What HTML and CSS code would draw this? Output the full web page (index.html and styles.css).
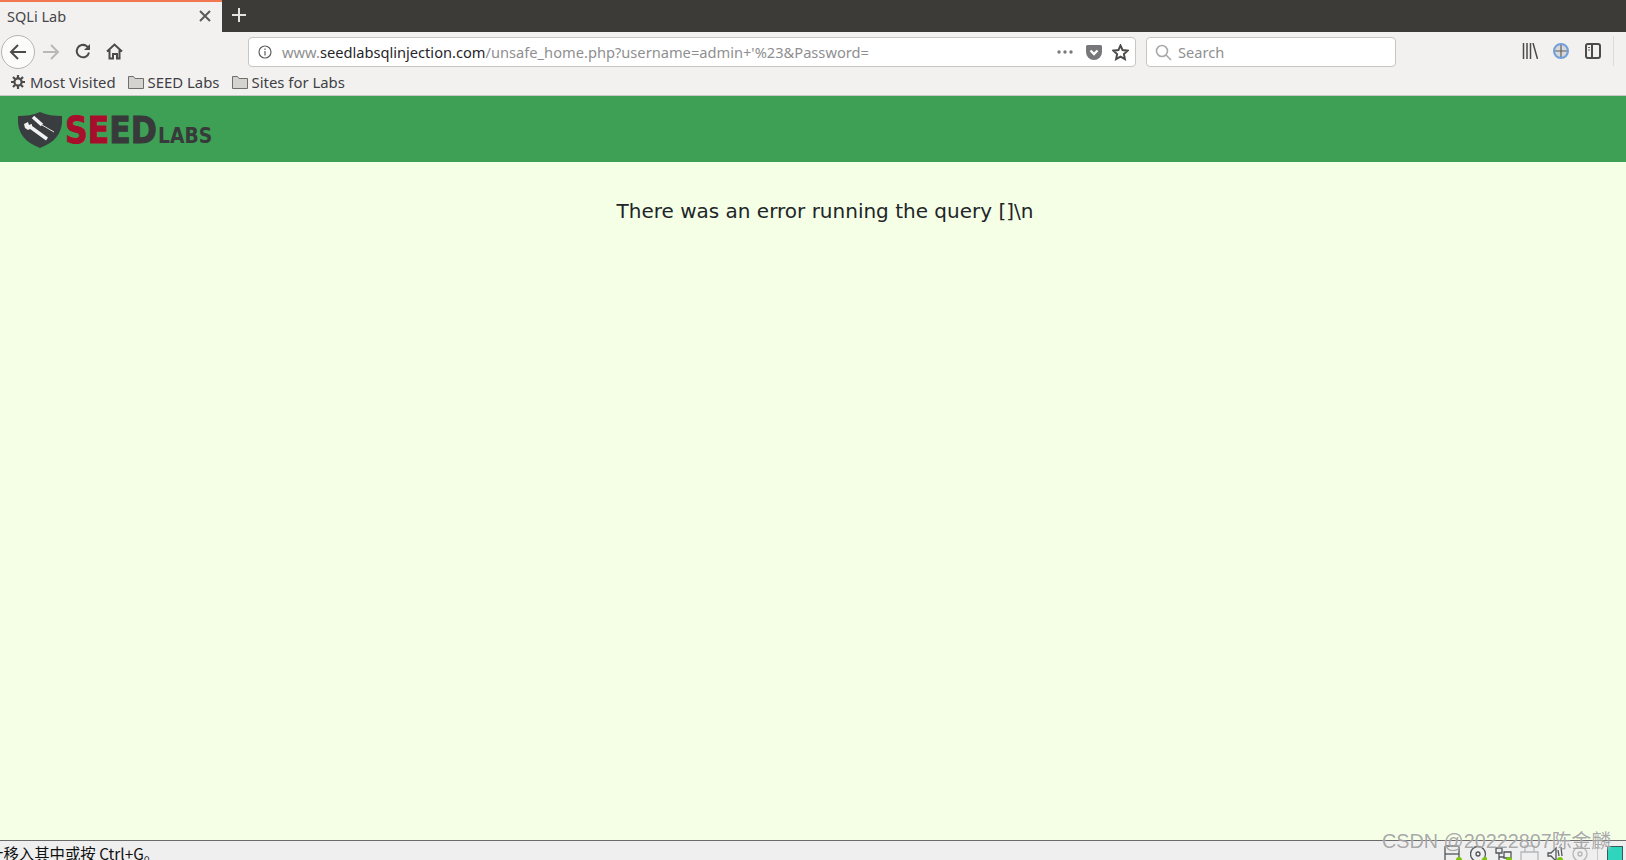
FILE: index.html
```html
<!DOCTYPE html>
<html lang="en">
<head>
<meta charset="utf-8">
<title>SQLi Lab</title>
<link rel="stylesheet" href="styles.css">
</head>
<body>
<div class="window">
  <header class="tabbar">
    <div class="tab">
      <span class="tab-title">SQLi Lab</span>
      <svg class="tab-close" width="14" height="14" viewBox="0 0 14 14"><path d="M2 2l10 10M12 2L2 12" class="st st-mid"/></svg>
    </div>
    <svg class="new-tab" width="16" height="16" viewBox="0 0 16 16"><path d="M8 1v14M1 8h14" class="st st-light"/></svg>
  </header>

  <nav class="toolbar">
    <div class="back"><svg width="18" height="18" viewBox="0 0 18 18"><path d="M17 9H2M9 2L2 9l7 7" class="st st-dark"/></svg></div>
    <svg class="forward" width="18" height="18" viewBox="0 0 18 18"><path d="M1 9h15M9 2l7 7-7 7" class="st st-faint"/></svg>
    <svg class="reload" width="16" height="16" viewBox="0 0 16 16"><path d="M14 9.5A6.2 6.2 0 1 1 11.5 3L14 5" class="st st-dark"/><path d="M15 1v6H9z" class="fill-dark"/></svg>
    <svg class="home" width="17" height="17" viewBox="0 0 17 17"><path d="M1 8.5L8.5 1.5 16 8.5M3.5 7v8.5h3.500V11h4v4.500h2.500V7" class="st st-dark"/></svg>
    <div class="field urlbar">
      <svg class="info" width="14" height="14" viewBox="0 0 14 14"><circle cx="7" cy="7" r="6" class="st st-thin"/><path d="M7 6v4.500M7 3.500v1.500" class="st st-thin"/></svg>
      <span class="url"><span class="url-dim">www.</span>seedlabsqlinjection.com<span class="url-dim">/unsafe_home.php?username=admin+'%23&amp;Password=</span></span>
      <svg class="dots" width="16" height="4" viewBox="0 0 16 4"><circle cx="2" cy="2" r="1.700"/><circle cx="8" cy="2" r="1.700"/><circle cx="14" cy="2" r="1.700"/></svg>
      <svg class="pocket" width="16" height="15" viewBox="0 0 16 15"><path d="M1.500 0h13A1.500 1.500 0 0 1 16 1.500V7A8 8 0 0 1 0 7V1.500A1.500 1.500 0 0 1 1.500 0z" class="fill-pocket"/><path d="M4.500 5.500L8 9l3.500-3.500" class="st st-white"/></svg>
      <svg class="star" width="17" height="17" viewBox="0 0 17 17"><path d="M8.500 1.500l2.100 4.600 5 .6-3.700 3.400 1 5-4.400-2.500-4.400 2.500 1-5L1.400 6.700l5-.6z" class="st st-dark"/></svg>
    </div>
    <div class="field searchbar">
      <svg width="17" height="17" viewBox="0 0 17 17"><circle cx="7" cy="7" r="5.500" class="st st-search"/><path d="M11 11l5 5" class="st st-search"/></svg>
      <span class="search-text">Search</span>
    </div>
    <svg class="library" width="16" height="16" viewBox="0 0 16 16"><path d="M1.500 0v16M5 0v16M8.500 0v16M11 0l4.500 16" class="st st-lib"/></svg>
    <svg class="globe" width="16" height="16" viewBox="0 0 16 16"><circle cx="8" cy="8" r="7" class="globe-ring"/><path d="M8 2v12M2 8h12" class="st st-thin"/></svg>
    <svg class="sidebar" width="16" height="16" viewBox="0 0 16 16"><rect x="1" y="1" width="14" height="14" rx="2" class="st st-dark"/><path d="M7 1v14" class="st st-dark"/><path d="M3 4.500h2M3 7h2" class="st st-thin"/></svg>
    <span class="toolbar-sep"></span>
  </nav>

  <div class="bookmarks">
    <svg class="gear" width="14" height="14" viewBox="0 0 14 14"><circle cx="7" cy="7" r="3.600" class="gear-ring"/><path d="M7 0v3M7 11v3M0 7h3M11 7h3M2 2l2 2M10 10l2 2M12 2l-2 2M4 10l-2 2" class="gear-teeth"/></svg>
    <span class="mark mark-first">Most Visited</span>
    <svg class="folder" width="16" height="15" viewBox="0 0 16 15"><path d="M.5 13.500V1.500h5l1.500 2h8.500v10z" class="folder-shape"/></svg>
    <span class="mark">SEED Labs</span>
    <svg class="folder" width="16" height="15" viewBox="0 0 16 15"><path d="M.5 13.500V1.500h5l1.500 2h8.500v10z" class="folder-shape"/></svg>
    <span class="mark">Sites for Labs</span>
  </div>

  <section class="site-header">
    <svg class="logo-shield" width="44" height="38" viewBox="0 0 44 38">
      <path d="M22 1C29 4 36 5 44 5c1 13-3 25-22 32C3 30-1 18 0 5 8 5 15 4 22 1z" class="shield"/>
      <path d="M11 15l18 13" class="tool-wrench"/>
      <path d="M6 13l4-2 1 3 3-1 0 4-4 2-3-2z" class="tool-head"/>
      <path d="M15 6l9 8" class="tool-wrench"/>
      <path d="M24 14l12 7" class="tool-thin"/>
    </svg>
    <span class="logo-seed"><span class="logo-red">SE</span><span class="logo-dark">ED</span></span>
    <span class="logo-labs">LABS</span>
  </section>

  <main class="content">
    <p class="message">There was an error running the query []\n</p>
  </main>

  <footer class="statusbar">
    <span class="status-text">针移入其中或按 Ctrl+G。</span>
    <div class="status-icons">
      <svg width="18" height="20" viewBox="0 0 18 20"><rect x="1" y="3" width="14" height="18" rx="1" class="st st-icon"/><path d="M1 11h14" class="st st-icon"/><circle cx="15" cy="17" r="3" class="dot"/></svg>
      <svg width="17" height="20" viewBox="0 0 17 20"><circle cx="8" cy="11" r="7.500" class="st st-icon"/><circle cx="8" cy="11" r="2" class="st st-icon"/><circle cx="15" cy="17" r="3" class="dot"/></svg>
      <svg width="17" height="20" viewBox="0 0 17 20"><path d="M1 5h6v5H1zM9 9h7v6H9zM4 10v8M4 14h5" class="st st-icon"/><circle cx="14" cy="17" r="3" class="dot"/></svg>
      <svg width="19" height="20" viewBox="0 0 19 20"><path d="M5 3h9v6H5zM1 9h17v11H1z" class="st st-gray"/></svg>
      <svg width="17" height="20" viewBox="0 0 17 20"><path d="M1 10h3l5-5v13l-5-5H1z" class="st st-icon"/><path d="M11 7l1 6M14 4l1 9" class="st st-icon"/><circle cx="13" cy="17" r="3" class="dot"/></svg>
      <svg width="17" height="20" viewBox="0 0 17 20"><circle cx="8" cy="11" r="7" class="st st-gray"/><circle cx="8" cy="11" r="2" class="st st-gray"/></svg>
      <span class="status-sep"></span>
      <span class="vm-box"></span>
    </div>
  </footer>

  <div class="watermark">CSDN @20222807陈金麟</div>
</div>
</body>
</html>
```

FILE: styles.css
```css
* { box-sizing: border-box; }
html, body { margin: 0; padding: 0; height: 100%; overflow: hidden; }
.window {
  position: relative;
  width: 1626px;
  height: 860px;
  display: flex;
  flex-direction: column;
  font-family: "Noto Sans", "Open Sans", sans-serif;
  background: #f2f1ef;
  overflow: hidden;
}

/* shared strokes */
.st { fill: none; stroke-width: 2; }
.st-mid { stroke: #5b5a57; }
.st-light { stroke: #e4e3df; }
.st-dark { stroke: #4c4b49; }
.st-lib { stroke: #4c4b49; stroke-width: 1.5; }
.st-faint { stroke: #b9b8b6; }
.st-thin { stroke: #5f5f5f; stroke-width: 1.2; }
.st-white { stroke: #fff; stroke-width: 2.4; }
.st-search { stroke: #a9a9a9; stroke-width: 1.6; }
.st-icon { stroke: #51565a; stroke-width: 1.3; }
.st-gray { stroke: #b4b6b8; stroke-width: 1.3; }
.fill-dark { fill: #4c4b49; }
.fill-pocket { fill: #77767a; }

/* tab strip */
.tabbar {
  height: 32px;
  flex: none;
  display: flex;
  align-items: center;
  background: #3c3b37;
}
.tab {
  width: 222px;
  height: 32px;
  display: flex;
  align-items: center;
  justify-content: space-between;
  padding: 0 10px 3px 7px;
  background: #f2f1ef;
  border-top: 2px solid #f0774f;
}
.tab-title { font-size: 14.5px; color: #45454a; }
.new-tab { margin: 0 0 2px 9px; }

/* navigation */
.toolbar {
  height: 38px;
  flex: none;
  display: flex;
  align-items: center;
  padding-left: 1px;
}
.back {
  width: 34px;
  height: 34px;
  margin-top: 2px;
  border: 1px solid #b5b4b1;
  border-radius: 50%;
  background: #fbfbfa;
  display: flex;
  align-items: center;
  justify-content: center;
  flex: none;
}
.forward { margin: 2px 0 0 7px; }
.reload { margin: 0 0 0 15px; }
.home { margin: 0 0 0 15px; }
.field {
  height: 30px;
  margin-top: 2px;
  background: #fff;
  border: 1px solid #c6c5c2;
  border-radius: 4px;
  display: flex;
  align-items: center;
  flex: none;
}
.urlbar {
  width: 888px;
  margin-left: 125px;
  padding: 0 6px 0 9px;
}
.info { flex: none; }
.url {
  margin-left: 10px;
  flex: 1;
  font-size: 14.65px;
  color: #26262a;
  white-space: nowrap;
}
.url-dim { color: #8f8f91; }
.dots { fill: #7a7a7a; margin-right: 13px; flex: none; }
.star { margin-left: 10px; }
.searchbar {
  width: 250px;
  margin-left: 10px;
  padding-left: 8px;
}
.search-text { margin-left: 6px; font-size: 14.6px; color: #8f8f91; }
.library { margin-left: 126px; }
.globe { margin-left: 15px; }
.sidebar { margin-left: 16px; }
.globe-ring { fill: #d8d8d8; stroke: #6f9fdc; stroke-width: 2; }
.toolbar-sep { width: 1px; height: 30px; margin-left: 12px; background: #dcdbd8; }

/* bookmarks */
.bookmarks {
  height: 26px;
  flex: none;
  display: flex;
  align-items: center;
  padding: 0 0 1px 11px;
  border-bottom: 1px solid #c9c8c5;
}
.mark { font-size: 14.9px; color: #3f4046; margin-left: 4px; }
.mark-first { margin-left: 5px; }
.mark + .folder { margin-left: 12px; }
.gear-ring { fill: none; stroke: #4c4b49; stroke-width: 2.2; }
.gear-teeth { stroke: #4c4b49; stroke-width: 2.2; }
.folder-shape { fill: #d4d3d0; stroke: #6f6e6c; }

/* page */
.site-header {
  height: 66px;
  flex: none;
  background: #3ea055;
  padding: 15px 0 0 18px;
  display: flex;
  align-items: baseline;
}
.logo-shield { display: block; align-self: flex-start; flex: none; margin-right: 3px; }
.shield { fill: #3a3d40; }
.tool-wrench { stroke: #f1f1f1; stroke-width: 3.5; fill: none; }
.tool-head { fill: #f1f1f1; }
.tool-thin { stroke: #e4e4e4; stroke-width: 1; fill: none; }
.logo-seed {
  width: 93px;
  flex: none;
  font-family: "DejaVu Sans", sans-serif;
  font-weight: 700;
  font-size: 38px;
  line-height: 38px;
  white-space: nowrap;
  -webkit-text-stroke: 1px;
  transform: scaleX(.83);
  transform-origin: 0 50%;
}
.logo-red { color: #a80d2b; }
.logo-dark { color: #37393b; }
.logo-labs {
  width: 54px;
  flex: none;
  font-family: "DejaVu Sans", sans-serif;
  font-weight: 700;
  font-size: 22px;
  line-height: 24px;
  color: #37393b;
  white-space: nowrap;
  transform: scaleX(.85);
  transform-origin: 0 50%;
}
.content { flex: 1; min-height: 0; background: #f4ffe6; }
.message {
  margin: 35px 0 0;
  padding-left: 24px;
  text-align: center;
  font-family: "DejaVu Sans", sans-serif;
  font-size: 20px;
  line-height: 28px;
  color: #212529;
}

/* VM status bar */
.statusbar {
  height: 20px;
  flex: none;
  display: flex;
  justify-content: space-between;
  background: #efefef;
  border-top: 1px solid #6a6a6a;
  overflow: hidden;
}
.status-text {
  margin-left: -12px;
  padding-top: 2px;
  font-family: "Noto Sans CJK SC", "Noto Sans", sans-serif;
  font-size: 15.4px;
  line-height: 20px;
  color: #111;
  white-space: nowrap;
}
.status-icons {
  display: flex;
  align-items: flex-start;
  gap: 8px;
  padding: 2px 3px 0 0;
}
.status-icons svg { display: block; flex: none; }
.dot { fill: #7cc70b; }
.status-sep { width: 1px; height: 20px; background: #c8c8c8; margin-right: 1px; }
.vm-box { width: 16px; height: 20px; margin-top: 3px; background: #2fd6bd; border: 1px solid #3a5a55; }

/* overlay */
.watermark {
  position: absolute;
  right: 15px;
  bottom: 7px;
  font-family: "Liberation Sans", "Noto Sans CJK SC", sans-serif;
  font-size: 19.8px;
  line-height: 24px;
  color: rgba(120, 120, 120, .65);
  text-shadow: 0 0 1px rgba(255, 255, 255, .9);
  white-space: nowrap;
}
```
